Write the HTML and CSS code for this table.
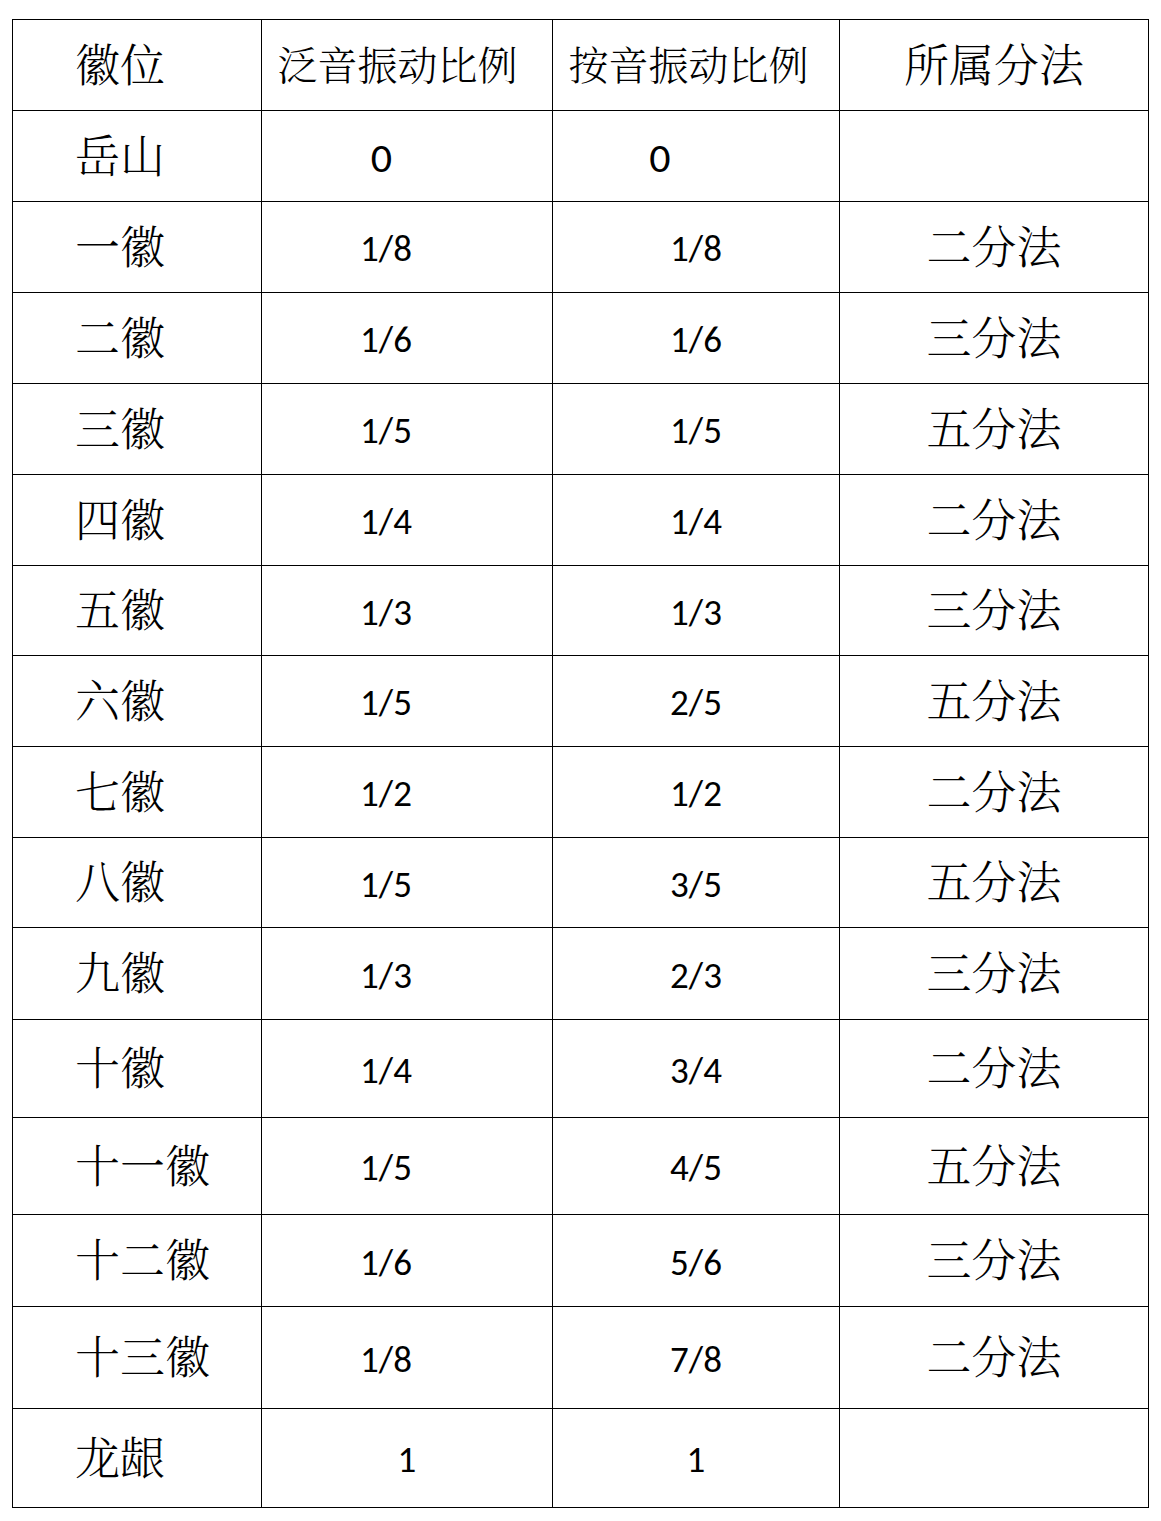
FILE: index.html
```html
<!DOCTYPE html>
<html lang="zh-CN">
<head>
<meta charset="utf-8">
<title>徽位振动比例</title>
<link rel="stylesheet" href="styles.css">
</head>
<body>
<div class="page">
<table class="hui">
  <colgroup>
    <col class="c1"><col class="c2"><col class="c3"><col class="c4">
  </colgroup>
  <tr class="r91">
    <td class="name">徽位</td>
    <td class="head h2">泛音振动比例</td>
    <td class="head h3">按音振动比例</td>
    <td class="method">所属分法</td>
  </tr>
  <tr class="r91">
    <td class="name">岳山</td>
    <td class="num big z2">0</td>
    <td class="num big z3">0</td>
    <td class="method"></td>
  </tr>
  <tr class="r91"><td class="name">一徽</td><td class="num f2">1/8</td><td class="num">1/8</td><td class="method">二分法</td></tr>
  <tr class="r91"><td class="name">二徽</td><td class="num f2">1/6</td><td class="num">1/6</td><td class="method">三分法</td></tr>
  <tr class="r91"><td class="name">三徽</td><td class="num f2">1/5</td><td class="num">1/5</td><td class="method">五分法</td></tr>
  <tr class="r91"><td class="name">四徽</td><td class="num f2">1/4</td><td class="num">1/4</td><td class="method">二分法</td></tr>
  <tr class="r90"><td class="name">五徽</td><td class="num f2">1/3</td><td class="num">1/3</td><td class="method">三分法</td></tr>
  <tr class="r91"><td class="name">六徽</td><td class="num f2">1/5</td><td class="num">2/5</td><td class="method">五分法</td></tr>
  <tr class="r91"><td class="name">七徽</td><td class="num f2">1/2</td><td class="num">1/2</td><td class="method">二分法</td></tr>
  <tr class="r90"><td class="name">八徽</td><td class="num f2">1/5</td><td class="num">3/5</td><td class="method">五分法</td></tr>
  <tr class="r92"><td class="name">九徽</td><td class="num f2">1/3</td><td class="num">2/3</td><td class="method">三分法</td></tr>
  <tr class="r98"><td class="name">十徽</td><td class="num f2">1/4</td><td class="num">3/4</td><td class="method">二分法</td></tr>
  <tr class="r97"><td class="name">十一徽</td><td class="num f2">1/5</td><td class="num">4/5</td><td class="method">五分法</td></tr>
  <tr class="r92"><td class="name">十二徽</td><td class="num f2">1/6</td><td class="num">5/6</td><td class="method">三分法</td></tr>
  <tr class="r102"><td class="name">十三徽</td><td class="num f2">1/8</td><td class="num">7/8</td><td class="method">二分法</td></tr>
  <tr class="r99">
    <td class="name">龙龈</td>
    <td class="num">1</td>
    <td class="num">1</td>
    <td class="method"></td>
  </tr>
</table>
</div>
</body>
</html>
```

FILE: styles.css
```css
html, body {
  margin: 0;
  padding: 0;
  background: #ffffff;
}

.page {
  padding: 19px 0 0 12px;
}

.hui {
  border-collapse: collapse;
  table-layout: fixed;
  width: 1136px;
  color: #000;
  font-family: "Noto Serif CJK SC", "Noto Sans CJK SC", serif;
  font-weight: 300;
}

.c1 { width: 249px; }
.c2 { width: 291px; }
.c3 { width: 287px; }
.c4 { width: 309px; }

.hui td {
  border: 1px solid #000;
  padding: 0 0 6px 0;
  vertical-align: middle;
  white-space: nowrap;
}

.r90 { height: 90px; }
.r91 { height: 91px; }
.r92 { height: 92px; }
.r97 { height: 97px; }
.r98 { height: 98px; }
.r99 { height: 99px; }
.r102 { height: 102px; }

.name {
  font-size: 45px;
  padding-left: 62px !important;
  text-align: left;
}

.head {
  font-size: 40px;
  text-align: center;
}
.h2 { padding-right: 19px !important; }
.h3 { padding-right: 15px !important; }

.method {
  font-size: 45px;
  text-align: center;
}

.hui td.num {
  font-family: "Carlito", "Lato", "Liberation Sans", sans-serif;
  font-weight: 500;
  font-size: 37px;
  text-align: center;
  padding-top: 3px;
  padding-bottom: 0;
}
.hui td.big { font-size: 42px; }
.hui td.f2 { padding-right: 42px; }
.hui td.z2 { padding-right: 51px; }
.hui td.z3 { padding-right: 72px; }
```
